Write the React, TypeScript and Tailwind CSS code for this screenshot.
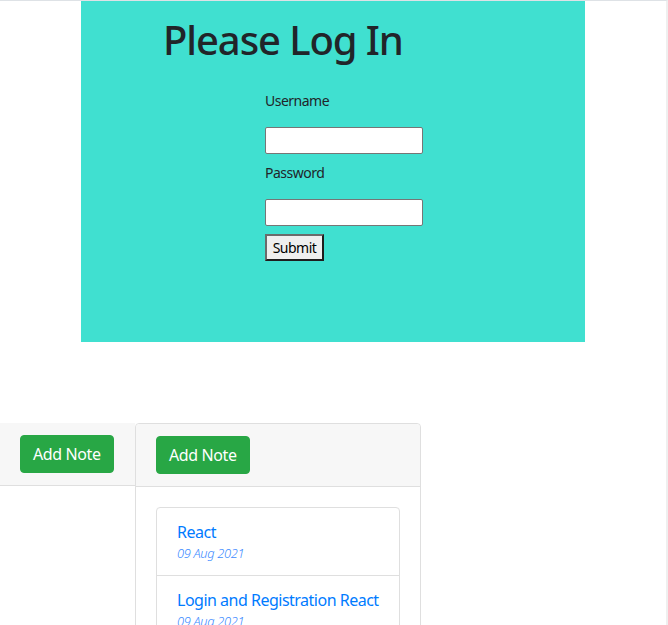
import React from 'react';

const notes = [
  { title: 'React', date: '09 Aug 2021' },
  { title: 'Login and Registration React', date: '09 Aug 2021' },
];

export default function App() {
  return (
    <div className="h-[625px] overflow-hidden bg-white border-t border-[#dee2e6] border-r-2 border-r-[#efefef] font-['Noto_Sans',sans-serif] text-[#212529]">
      {/* Login panel */}
      <div className="ml-[81px] w-[504px] h-[341px] bg-[#40e0d0] pt-[15px]">
        <h1 className="ml-[82px] text-[40px] leading-[48px] font-medium tracking-[-1.1px]">Please Log In</h1>
        <form className="ml-[184px] mt-[27px] flex flex-col items-start" onSubmit={(e) => e.preventDefault()}>
          <label className="flex flex-col items-start">
            <p className="text-[14px] leading-[20px] mb-[16px] tracking-[-0.5px]">Username</p>
            <input type="text" className="w-[158px] h-[27px] bg-white border border-[#767676] rounded-[2px]" />
          </label>
          <label className="flex flex-col items-start mt-[9px]">
            <p className="text-[14px] leading-[20px] mb-[16px] tracking-[-0.5px]">Password</p>
            <input type="password" className="w-[158px] h-[27px] bg-white border border-[#767676] rounded-[2px]" />
          </label>
          <button
            type="submit"
            className="mt-[8px] w-[59px] h-[27px] text-[14px] leading-none tracking-[-0.5px] bg-[#efefef] border-2 border-t-[#6b6b6b] border-l-[#6b6b6b] border-r-[#1e1e1e] border-b-[#1e1e1e] text-black"
          >
            Submit
          </button>
        </form>
      </div>

      {/* Notes cards */}
      <div className="mt-[81px] flex items-start">
        <div className="w-[135px] shrink-0">
          <div className="bg-[#f7f7f7] px-5 pt-3 pb-3 border-b border-[#dfdfdf]">
            <AddNote />
          </div>
          <div className="h-[200px]" />
        </div>
        <div className="w-[286px] border border-[#dfdfdf] rounded-[4px] shrink-0">
          <div className="bg-[#f7f7f7] px-5 py-3 border-b border-[#dfdfdf] rounded-t-[4px]">
            <AddNote />
          </div>
          <div className="p-5">
            <div className="border border-[#dfdfdf] rounded-[4px]">
              {notes.map((n, i) => (
                <div key={i} className={`px-5 py-3 ${i < notes.length - 1 ? 'border-b border-[#dfdfdf]' : ''}`}>
                  <a href="#" className="block whitespace-nowrap text-[16px] leading-6 tracking-[-0.5px] text-[#007bff]">{n.title}</a>
                  <div className="text-[12.8px] leading-[19.2px] italic font-light tracking-[-0.3px] text-[#3d8bff]">{n.date}</div>
                </div>
              ))}
            </div>
          </div>
        </div>
      </div>
    </div>
  );
}

const AddNote = () => (
  <button className="whitespace-nowrap bg-[#28a745] border border-[#28a745] text-white text-[16px] leading-6 tracking-[-0.4px] px-3 py-[6px] rounded-[4px]">
    Add Note
  </button>
);
